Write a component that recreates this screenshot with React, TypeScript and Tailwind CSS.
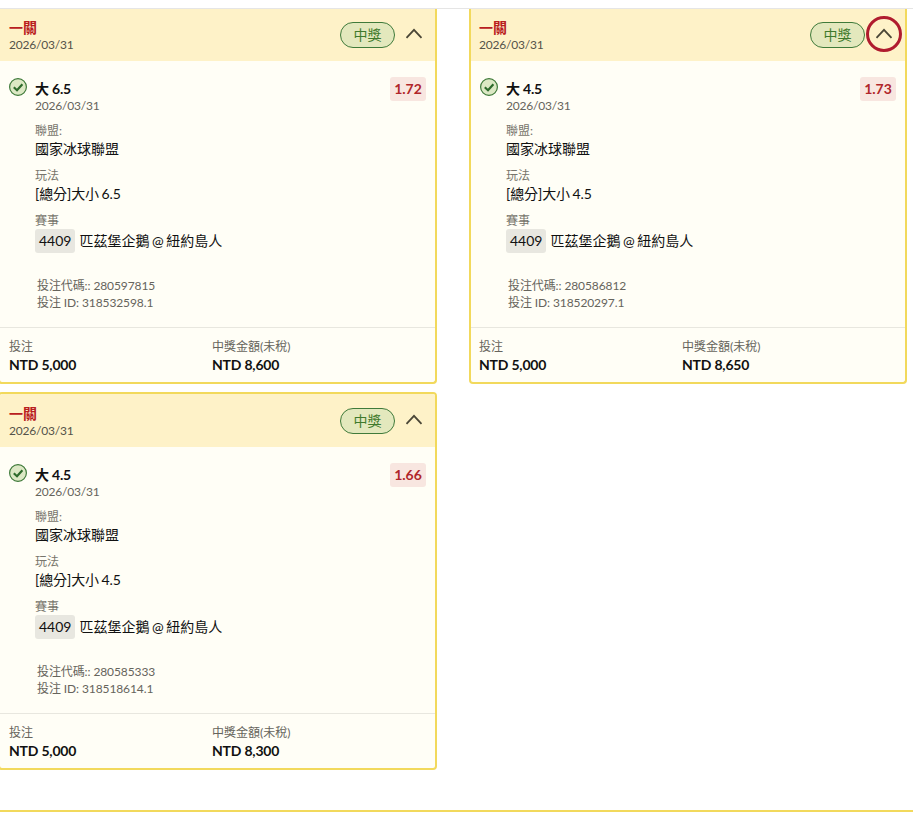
const font = { fontFamily: '"Lato","Noto Sans CJK TC",sans-serif' };

type Bet = { pick: string; line: string; odds: string; code: string; id: string; win: string; right?: boolean; first?: boolean };

const bets: Bet[] = [
  { pick: "大 6.5", line: "[總分]大小 6.5", odds: "1.72", code: "280597815", id: "318532598.1", win: "NTD 8,600", first: true },
  { pick: "大 4.5", line: "[總分]大小 4.5", odds: "1.73", code: "280586812", id: "318520297.1", win: "NTD 8,650", right: true, first: true },
  { pick: "大 4.5", line: "[總分]大小 4.5", odds: "1.66", code: "280585333", id: "318518614.1", win: "NTD 8,300" },
];

function Chevron() {
  return (
    <svg width="18" height="11" viewBox="0 0 18 11" fill="none" stroke="#4a4636" strokeWidth="1.8">
      <path d="M1.5 9.8 L9 1.8 L16.5 9.8" />
    </svg>
  );
}

function Check() {
  return (
    <svg width="18" height="18" viewBox="0 0 18 18" className="shrink-0">
      <circle cx="9" cy="9" r="8.4" fill="#dce8c4" stroke="#3f7a3a" strokeWidth="1.2" />
      <path d="M4.8 9.2 L8 12.2 L13.4 6.2" fill="none" stroke="#2f6b2c" strokeWidth="2.2" />
    </svg>
  );
}

function Card({ b }: { b: Bet }) {
  return (
    <div className={`bg-[#fffef6] border-2 border-[#f2d95c] rounded-[4px] overflow-hidden h-fit ${b.first ? "border-t-0 rounded-t-none" : ""}`}>
      <div className={`bg-[#fef2c8] pr-[3px] flex items-center justify-between ${b.right ? "pl-[8px]" : "pl-[9px]"} ${b.first ? "h-[52px]" : "h-[53px] pt-[1px]"}`}>
        <div className="flex flex-col mt-[1px]">
          <span className="text-[14px] leading-[18px] font-bold text-[#b8201f]">一關</span>
          <span className="text-[12px] leading-[16px] text-[#55534a] tracking-[-0.2px]">2026/03/31</span>
        </div>
        <div className="flex items-center">
          <span className="w-[55px] h-[26px] rounded-full border border-[#3f7a3a] bg-[#e3e8bd] text-[#3f7a2c] text-[14px] leading-[24px] text-center mr-[1px]">中獎</span>
          <span className={`w-[36px] h-[36px] mt-[-3px] rounded-full flex items-center justify-center ${b.right ? "border-[3px] border-[#b01c2e]" : ""}`}>
            <Chevron />
          </span>
        </div>
      </div>
      <div className="pl-[9px] pr-[9px] pt-[18px] h-[266px] flex flex-col">
        <div className="flex items-start">
          <div className="mt-[-1px]"><Check /></div>
          <div className="ml-[8px] flex-1">
            <div className="text-[14px] leading-[20px] font-bold text-[#111] tracking-[-0.2px]">{b.pick}</div>
            <div className="text-[12px] leading-[14px] text-[#66645c] tracking-[-0.2px]">2026/03/31</div>
          </div>
          <span className="w-[36px] h-[24px] rounded-[3px] bg-[#f8e6e0] text-[#b0262a] text-[14px] leading-[24px] font-bold text-center mt-[-2px]">{b.odds}</span>
        </div>
        <div className="ml-[26px] mt-[10px] text-[#111]">
          <div className="text-[12px] leading-[16px] text-[#77756c]">聯盟:</div>
          <div className="text-[14px] leading-[20px]">國家冰球聯盟</div>
          <div className="text-[12px] leading-[16px] text-[#77756c] mt-[9px]">玩法</div>
          <div className="text-[14px] leading-[20px] tracking-[-0.1px] [word-spacing:-1px]">{b.line}</div>
          <div className="text-[12px] leading-[16px] text-[#77756c] mt-[9px]">賽事</div>
          <div className="flex items-center text-[14px] leading-[24px]">
            <span className="bg-[#e8e7e0] rounded-[3px] px-[4px] mr-[4px]">4409</span>
            <span className="[word-spacing:-1px]">匹茲堡企鵝 @ 紐約島人</span>
          </div>
          <div className="ml-[2px] mt-[24px] text-[12px] leading-[17px] text-[#66645c] tracking-[-0.1px]">
            <div>投注代碼:: {b.code}</div>
            <div>投注 ID: {b.id}</div>
          </div>
        </div>
      </div>
      <div className={`border-t border-[#e8e7df] pt-[10px] h-[55px] grid grid-cols-[203px_1fr] ${b.right ? "pl-[8px]" : "pl-[9px]"}`}>
        <div>
          <div className="text-[12px] leading-[17px] text-[#66645c]">投注</div>
          <div className="text-[14px] leading-[20px] font-bold text-[#111] tracking-[-0.2px]">NTD 5,000</div>
        </div>
        <div>
          <div className="text-[12px] leading-[17px] text-[#66645c]">中獎金額(未稅)</div>
          <div className="text-[14px] leading-[20px] font-bold text-[#111] tracking-[-0.2px]">{b.win}</div>
        </div>
      </div>
    </div>
  );
}

export default function App() {
  return (
    <div style={font} className="w-[913px] h-[814px] overflow-hidden bg-white">
      <div className="h-[9px] border-b border-[#e5e5e5]" />
      <div className="ml-[-2px] w-[909px] grid grid-cols-[439px_438px] gap-x-[32px] gap-y-[8px]">
        {bets.map((b) => (
          <Card key={b.code} b={b} />
        ))}
      </div>
      <div className="mt-[40px] border-t-2 border-[#f2d95c]" />
    </div>
  );
}
